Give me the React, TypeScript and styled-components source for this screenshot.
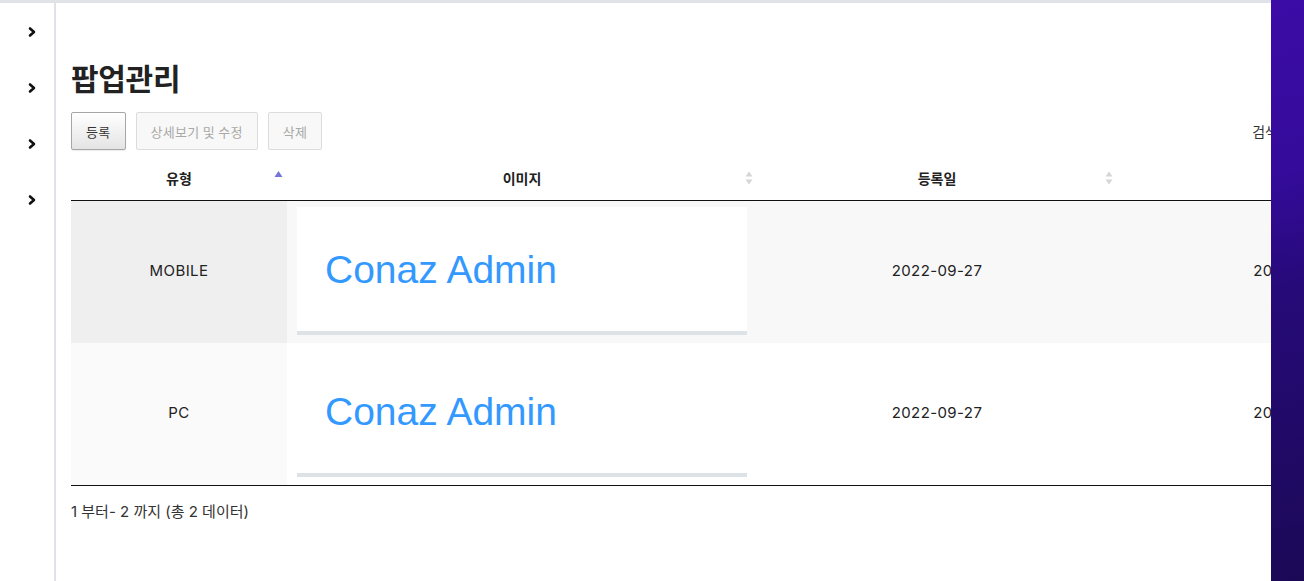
import React from 'react';
import styled, { createGlobalStyle } from 'styled-components';

const GlobalStyle = createGlobalStyle`
  html, body {
    margin: 0;
    padding: 0;
    background: #fff;
    overflow: hidden;
  }
  body {
    font-family: Inter, 'Noto Sans CJK KR', sans-serif;
    color: #222;
  }
`;

const Frame = styled.div`
  display: flex;
  width: 1304px;
  height: 581px;
  overflow: hidden;
`;

const Page = styled.div`
  flex: 1;
  display: flex;
  border-top: 3px solid #dfe3e8;
  min-width: 0;
`;

const Sidebar = styled.nav`
  width: 54px;
  flex-shrink: 0;
  border-right: 2px solid #dfe3e8;
  display: flex;
  flex-direction: column;
`;

const SideItem = styled.div`
  height: 56px;
  display: flex;
  align-items: center;
  justify-content: center;
  padding: 1px 0 0 10px;
  box-sizing: border-box;
`;

const Main = styled.main`
  flex: 1;
  min-width: 0;
  overflow: hidden;
  padding-left: 15px;
`;

const Content = styled.div`
  width: 1409px;
`;

const Title = styled.h1`
  margin: 56px 0 0;
  font-family: 'Noto Sans CJK KR', sans-serif;
  font-size: 30px;
  line-height: 36px;
  font-weight: 700;
  color: #222;
  letter-spacing: -0.3px;
`;

const Toolbar = styled.div`
  margin-top: 17px;
  display: flex;
  align-items: center;
  justify-content: space-between;
`;

const ButtonGroup = styled.div`
  display: flex;
  gap: 10px;
`;

const Button = styled.button<{ $disabled?: boolean }>`
  height: 38px;
  padding: 0 14px;
  font-family: 'Noto Sans CJK KR', sans-serif;
  font-size: 13px;
  letter-spacing: 0.3px;
  border-radius: 2px;
  cursor: pointer;
  color: ${(p) => (p.$disabled ? '#a8a8a8' : '#333')};
  border: 1px solid ${(p) => (p.$disabled ? '#dcdcdc' : '#a6a6a6')};
  background: ${(p) =>
    p.$disabled ? '#f8f8f8' : 'linear-gradient(to bottom, #ffffff 0%, #e4e4e4 100%)'};
  box-shadow: ${(p) => (p.$disabled ? 'none' : '0 1px 1px rgba(0,0,0,0.08)')};
`;

const Search = styled.label`
  display: flex;
  align-items: center;
  gap: 6px;
  font-size: 14px;
  color: #333;
`;

const SearchInput = styled.input`
  width: 186px;
  height: 26px;
  border: 1px solid #aaa;
  border-radius: 3px;
`;

const Table = styled.table`
  margin-top: 10px;
  width: 1409px;
  border-collapse: collapse;
  table-layout: fixed;
  border-bottom: 1px solid #111;
`;

const Th = styled.th<{ $w: number }>`
  width: ${(p) => p.$w}px;
  height: 40px;
  padding: 0 10px 3px;
  font-family: 'Noto Sans CJK KR', sans-serif;
  font-size: 14px;
  font-weight: 700;
  color: #222;
  border-bottom: 1px solid #111;
  position: relative;
  box-sizing: border-box;
`;

const SortIcon = styled.span<{ $top: number }>`
  position: absolute;
  right: 4px;
  top: ${(p) => p.$top}px;
  display: flex;
`;

const Tr = styled.tr<{ $odd: boolean }>`
  background: ${(p) => (p.$odd ? '#f8f8f8' : '#ffffff')};
  & + & td {
    border-top: 1px solid #dddddd;
  }
`;

const Td = styled.td<{ $sorted?: boolean; $odd?: boolean }>`
  padding: 6px 10px 8px;
  text-align: center;
  vertical-align: middle;
  font-size: 15px;
  letter-spacing: 0.4px;
  color: #222;
  background: ${(p) => (p.$sorted ? (p.$odd ? '#efefef' : '#fafafa') : 'transparent')};
`;

const Banner = styled.div`
  width: 450px;
  height: 128px;
  box-sizing: border-box;
  background: #fff;
  border-bottom: 4px solid #dde2e7;
  display: flex;
  align-items: center;
  padding: 2px 0 0 28px;
  font-family: 'Liberation Sans', sans-serif;
  font-size: 39px;
  letter-spacing: 0;
  color: #3399ff;
`;

const Footer = styled.div`
  padding-top: 14px;
  font-size: 15px;
  color: #333;
`;

const Accent = styled.aside`
  width: 33px;
  flex-shrink: 0;
  background: linear-gradient(165deg, #3c0ca6 0%, #340b9a 30%, #260a78 50%, #1b0956 100%);
`;

const Chevron = () => (
  <svg width="10" height="12" viewBox="0 0 10 12">
    <path d="M3 2.5 L7 6 L3 9.5" fill="none" stroke="#111" strokeWidth="2.6" strokeLinecap="round" strokeLinejoin="round" />
  </svg>
);

const SortAsc = () => (
  <svg width="9" height="8" viewBox="0 0 9 8">
    <path d="M4.5 1 L8.5 7 L0.5 7 Z" fill="#7474d6" />
  </svg>
);

const SortBoth = () => (
  <svg width="8" height="16" viewBox="0 0 8 16">
    <path d="M4 1.5 L7.5 6.5 L0.5 6.5 Z" fill="#d6d6d6" />
    <path d="M4 14.5 L7.5 9.5 L0.5 9.5 Z" fill="#d6d6d6" />
  </svg>
);

const rows = [
  { type: 'MOBILE', date: '2022-09-27', updated: '2022-09-27' },
  { type: 'PC', date: '2022-09-27', updated: '2022-09-27' },
];

export default function App() {
  return (
    <>
      <GlobalStyle />
      <Frame>
        <Page>
          <Sidebar>
            {[0, 1, 2, 3].map((i) => (
              <SideItem key={i}>
                <Chevron />
              </SideItem>
            ))}
          </Sidebar>
          <Main>
            <Content>
              <Title>팝업관리</Title>
              <Toolbar>
                <ButtonGroup>
                  <Button>등록</Button>
                  <Button $disabled>상세보기 및 수정</Button>
                  <Button $disabled>삭제</Button>
                </ButtonGroup>
                <Search>
                  검색:
                  <SearchInput />
                </Search>
              </Toolbar>
              <Table>
                <thead>
                  <tr>
                    <Th $w={216}>
                      유형
                      <SortIcon $top={10}><SortAsc /></SortIcon>
                    </Th>
                    <Th $w={470}>
                      이미지
                      <SortIcon $top={10}><SortBoth /></SortIcon>
                    </Th>
                    <Th $w={360}>
                      등록일
                      <SortIcon $top={10}><SortBoth /></SortIcon>
                    </Th>
                    <Th $w={363}>
                      수정일
                      <SortIcon $top={10}><SortBoth /></SortIcon>
                    </Th>
                  </tr>
                </thead>
                <tbody>
                  {rows.map((r, i) => (
                    <Tr key={r.type} $odd={i % 2 === 0}>
                      <Td $sorted $odd={i % 2 === 0}>{r.type}</Td>
                      <Td>
                        <Banner>Conaz Admin</Banner>
                      </Td>
                      <Td>{r.date}</Td>
                      <Td>{r.updated}</Td>
                    </Tr>
                  ))}
                </tbody>
              </Table>
              <Footer>1 부터- 2 까지 (총 2 데이터)</Footer>
            </Content>
          </Main>
        </Page>
        <Accent />
      </Frame>
    </>
  );
}
